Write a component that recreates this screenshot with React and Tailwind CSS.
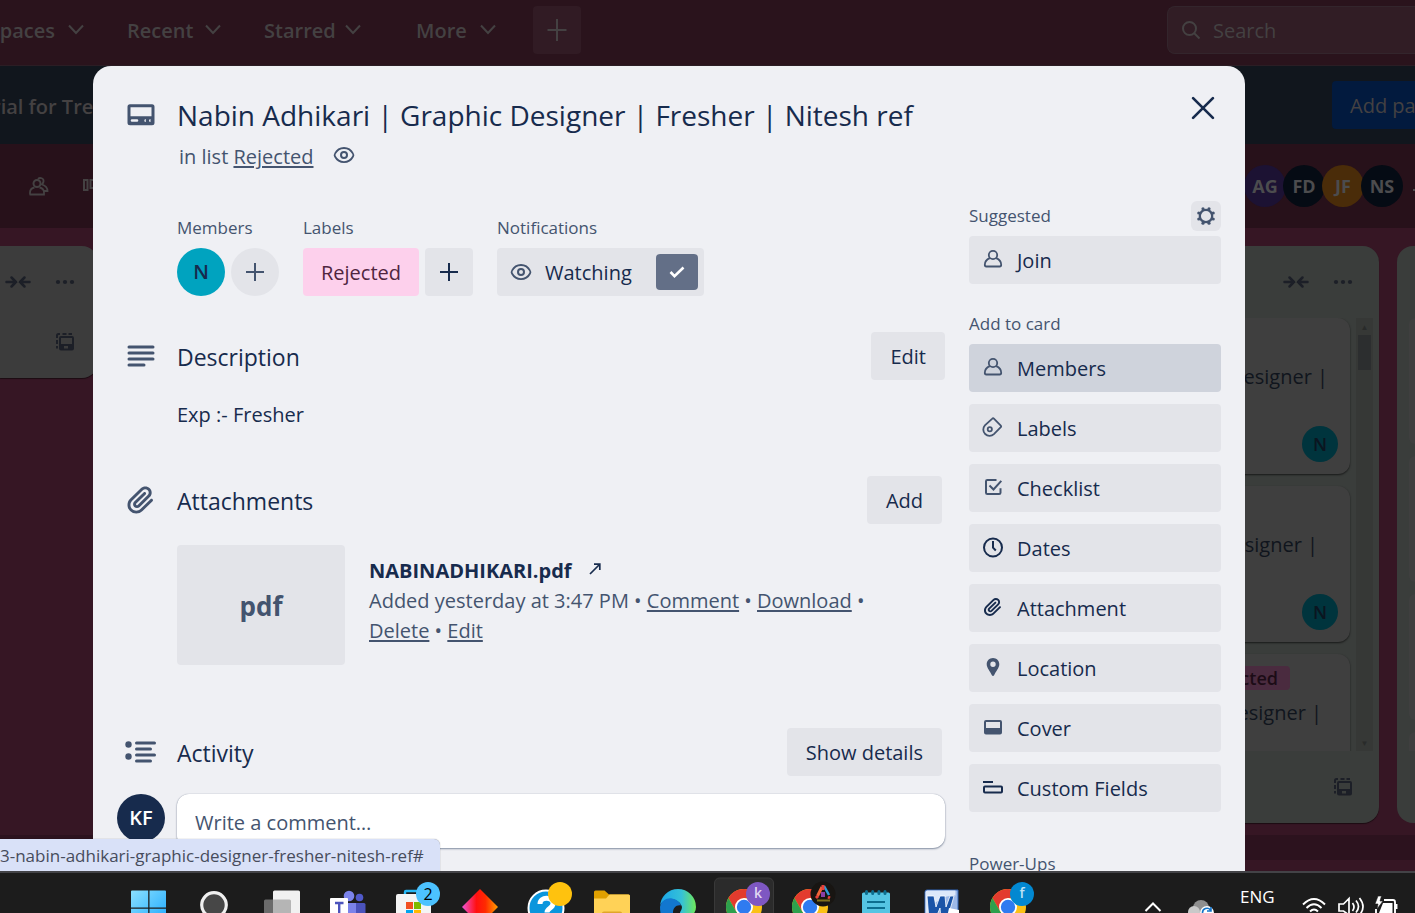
import React from "react";

const ATTACH =
  "M11.6426 17.9647C10.1123 19.46 7.62736 19.4606 6.10092 17.9691C4.57505 16.478 4.57769 14.0467 6.10253 12.5566L13.2505 5.57184C14.1476 4.6952 15.5861 4.69251 16.4832 5.56921C17.3763 6.44184 17.3778 7.85135 16.4869 8.72199L9.78361 15.2722C9.53288 15.5172 9.12807 15.5163 8.86954 15.2636C8.61073 15.0107 8.60963 14.6158 8.86954 14.3618L15.0989 8.27463C15.4812 7.90109 15.4812 7.29546 15.0989 6.92192C14.7167 6.54838 14.0969 6.54838 13.7146 6.92192L7.48523 13.0091C6.45911 14.0118 6.46356 15.618 7.48523 16.6163C8.50674 17.6145 10.1511 17.6186 11.1679 16.6249L17.8712 10.0748C19.5274 8.45632 19.5244 5.83555 17.8676 4.2165C16.2047 2.59156 13.5266 2.59657 11.8662 4.21913L4.71822 11.2039C2.42951 13.4404 2.42555 17.083 4.71661 19.3218C7.00774 21.5606 10.7323 21.5597 13.0269 19.3174L19.7133 12.7837C20.0956 12.4101 20.0956 11.8045 19.7133 11.431C19.331 11.0574 18.7113 11.0574 18.329 11.431L11.6426 17.9647Z";

function Svg({ box = "0 0 24 24", className, children }) {
  return (
    <svg viewBox={box} className={className} fill="none" stroke="currentColor" strokeWidth="2" aria-hidden="true">
      {children}
    </svg>
  );
}

/* ---------- icons ---------- */

const Chevron = () => (
  <Svg box="0 0 16 16" className="size-4 shrink-0">
    <path d="M1 3.500l7 7.500 7-7.500" strokeWidth="2" />
  </Svg>
);

const Plus = ({ className = "size-6" }) => (
  <Svg className={className}>
    <path d="M12 3v18M3 12h18" />
  </Svg>
);

const NavPlus = () => (
  <Svg className="size-6">
    <path d="M12 1v22M2.500 12h19" />
  </Svg>
);

const Eye = () => (
  <Svg className="size-6 shrink-0">
    <path d="M12 5c4.500 0 7.400 2.600 9 5.600.6 1 .6 1.900 0 2.900-1.600 3-4.500 5.600-9 5.600s-7.400-2.600-9-5.600c-.6-1-.6-1.900 0-2.900 1.600-3 4.500-5.600 9-5.600z" strokeWidth="1.800" />
    <circle cx="12" cy="12" r="3" strokeWidth="2" />
  </Svg>
);

const Person = () => (
  <Svg className="size-6">
    <circle cx="12" cy="8" r="4.200" strokeWidth="1.800" />
    <path d="M8.800 11.200c-3 1.300-5 3.800-5 6.600 0 1.200.5 1.700 1.500 1.700h13.400c1 0 1.500-.5 1.500-1.700 0-2.800-2-5.300-5-6.600" strokeWidth="1.800" />
  </Svg>
);

const LabelIcon = () => (
  <Svg className="size-6">
    <path d="M11.300 3.600c.5-.5 1.100-.5 1.600 0l6.900 7c.5.5.5 1.100 0 1.600l-6.900 6.900a6.300 6.300 0 0 1-9-8.800z" strokeWidth="1.800" />
    <circle cx="8.800" cy="14.300" r="2.100" strokeWidth="1.800" />
  </Svg>
);

const ChecklistIcon = () => (
  <Svg className="size-6">
    <path d="M15.500 4.900H6.400c-.9 0-1.400.5-1.400 1.400v11.400c0 .9.5 1.400 1.400 1.400h11.700c.9 0 1.400-.5 1.400-1.400v-4.500" strokeWidth="2" />
    <path d="M8.500 10.500l4 4 7.800-8.600" strokeWidth="2" />
  </Svg>
);

const ClockIcon = () => (
  <Svg className="size-6 text-[#172b4d]">
    <circle cx="12" cy="12.500" r="9" />
    <path d="M12 6v6.700l2.800 2.800" />
  </Svg>
);

const Clip = ({ className }) => (
  <svg viewBox="0 0 24 24" className={className} fill="currentColor" aria-hidden="true">
    <path fillRule="evenodd" d={ATTACH} />
  </svg>
);

const PinIcon = () => (
  <svg viewBox="0 0 24 24" className="size-6" fill="currentColor" aria-hidden="true">
    <path fillRule="evenodd" d="M12 3c-3.600 0-6.300 2.800-6.300 6.200 0 3.900 3.700 7.300 5.200 11 .4 1.100 1.800 1.100 2.200 0 1.500-3.700 5.200-7.100 5.200-11C18.300 5.800 15.600 3 12 3zm0 8.900a2.700 2.700 0 1 1 0-5.400 2.700 2.700 0 0 1 0 5.400z" />
  </svg>
);

const CoverIcon = () => (
  <svg viewBox="0 0 24 24" className="size-6" fill="currentColor" aria-hidden="true">
    <path fillRule="evenodd" d="M5 5h14a2 2 0 0 1 2 2v10.500a2 2 0 0 1-2 2H5a2 2 0 0 1-2-2V7a2 2 0 0 1 2-2zm0 2v6h14V7z" />
  </svg>
);

const FieldsIcon = () => (
  <Svg className="size-6 text-[#172b4d]">
    <path d="M2 7h10" />
    <rect x="3" y="11.500" width="18" height="6" rx="1" />
  </Svg>
);

const GearIcon = () => (
  <Svg box="0 0 20 20" className="size-5">
    <circle cx="10" cy="10" r="6.200" strokeWidth="2.300" />
    <g fill="currentColor" stroke="none">
      <circle cx="17.200" cy="13" r="1.600" />
      <circle cx="13" cy="17.200" r="1.600" />
      <circle cx="7" cy="17.200" r="1.600" />
      <circle cx="2.800" cy="13" r="1.600" />
      <circle cx="2.800" cy="7" r="1.600" />
      <circle cx="7" cy="2.800" r="1.600" />
      <circle cx="13" cy="2.800" r="1.600" />
      <circle cx="17.200" cy="7" r="1.600" />
    </g>
  </Svg>
);

const CardIcon = () => (
  <svg viewBox="0 0 28 24" className="h-6 w-7" fill="currentColor" aria-hidden="true">
    <path
      fillRule="evenodd"
      d="M3 1.200h22a2.500 2.500 0 0 1 2.500 2.500v16a2.500 2.500 0 0 1-2.500 2.500H3a2.500 2.500 0 0 1-2.500-2.500v-16A2.500 2.500 0 0 1 3 1.200zM3.500 4.200v9h21v-9zM5 16.200a1.300 1.300 0 0 0 0 2.600h5a1.300 1.300 0 0 0 0-2.600zM18.800 16a1.500 1.500 0 1 0 .001 3zM23.500 16a1.500 1.500 0 1 0 .001 3z"
    />
  </svg>
);

const TextIcon = () => (
  <Svg box="0 0 28 24" className="h-6 w-7">
    <path d="M2 3h24M2 9h24M2 15h24M2 21h15" strokeWidth="3" strokeLinecap="round" />
  </Svg>
);

const ActivityIcon = () => (
  <Svg box="0 0 32 24" className="h-6 w-8">
    <path d="M11.500 3h18M11.500 9h14M11.500 15h18M11.500 21h14" strokeWidth="3" strokeLinecap="round" />
    <circle cx="3.500" cy="4.500" r="3.200" fill="currentColor" stroke="none" />
    <circle cx="3.500" cy="16.500" r="3.200" fill="currentColor" stroke="none" />
  </Svg>
);

const Collapse = () => (
  <Svg box="0 0 26 14" className="h-[14px] w-[26px]">
    <path d="M1.500 7H11M6.500 2.500L11 7l-4.500 4.500M24.500 7H15M19.500 2.500L15 7l4.500 4.500" strokeWidth="2.500" strokeLinecap="round" />
  </Svg>
);

const Dots = () => (
  <svg viewBox="0 0 20 6" className="h-1.5 w-5" fill="currentColor" aria-hidden="true">
    <circle cx="3" cy="3" r="2.100" />
    <circle cx="10" cy="3" r="2.100" />
    <circle cx="17" cy="3" r="2.100" />
  </svg>
);

const TemplateIcon = () => (
  <Svg box="0 0 20 20" className="size-5">
    <path d="M2 16.500V14M2 12V8M2 6V3.500Q2 2 3.500 2H5M7.500 2h4M13.500 2H17" />
    <rect x="5" y="5" width="13" height="12.500" rx="1" />
    <path d="M5 13h13" strokeWidth="2" />
    <path d="M5 15.500h4M13 15.500h5" strokeWidth="4" />
  </Svg>
);

/* ---------- board behind the dialog ---------- */

function NavItem({ children, className }) {
  return (
    <button className={`flex items-center justify-between text-xl font-semibold ${className}`}>
      <span className="pt-0.5">{children}</span>
      <Chevron />
    </button>
  );
}

function ListHead() {
  return (
    <div className="flex h-[72px] items-center justify-end gap-6 pr-[26px] text-[#1c1f27]">
      <Collapse />
      <Dots />
    </div>
  );
}

function BoardCard({ title, label, member }) {
  return (
    <article className="flex h-[156px] w-full shrink-0 flex-col rounded-xl bg-[#3f3f3f] px-3 shadow-[0_1px_2px_rgba(0,0,0,0.6)]">
      <div className="flex h-[42px] items-center justify-end pt-1.5 pr-12">
        {label && <span className="rounded bg-[#4a2b3f] px-3 text-lg leading-6 font-semibold text-[#1c0c16]">{label}</span>}
      </div>
      <p className={`flex h-[34px] items-center justify-end text-xl text-[#10151d] ${title}`}>Graphic Designer |</p>
      {member && (
        <span className="mt-8 flex size-9 items-center justify-center self-end rounded-full bg-[#00343d] text-lg font-semibold text-[#0b1520]">
          {member}
        </span>
      )}
    </article>
  );
}

function Avatar({ children, className }) {
  return (
    <span className={`-ml-[3px] flex size-[42px] shrink-0 items-center justify-center rounded-full text-lg font-bold text-[#4c4c4e] ${className}`}>
      {children}
    </span>
  );
}

function Board() {
  return (
    <div className="flex h-full flex-col text-[#444142]">
      <header className="flex h-[66px] shrink-0 items-start border-b border-[#2b1d24] bg-[#2a131c] pt-1.5">
        <nav className="flex h-12 items-center">
          <NavItem className="-ml-[10px] w-[94px]">spaces</NavItem>
          <NavItem className="ml-[43px] w-[94px]">Recent</NavItem>
          <NavItem className="ml-[43px] w-[97px]">Starred</NavItem>
          <NavItem className="ml-[55px] w-[80px]">More</NavItem>
          <button aria-label="Create" className="ml-[37px] flex size-12 items-center justify-center rounded bg-[#311b24]">
            <NavPlus />
          </button>
        </nav>
        <label className="ml-auto flex h-12 w-[248px] items-center gap-3 rounded-l-lg border border-r-0 border-[#33252c] bg-[#311d25] pl-[13px]">
          <Svg box="0 0 20 20" className="size-5 shrink-0">
            <circle cx="8.500" cy="8.500" r="6.500" />
            <path d="M13 13l5.500 5.500" />
          </Svg>
          <input type="search" placeholder="Search" className="w-full bg-transparent pt-0.5 text-xl outline-none placeholder:text-[#444142]" />
        </label>
      </header>

      <div className="flex h-[78px] shrink-0 items-center justify-between bg-[#11161d]">
        <span className="-ml-2 pt-1 text-xl font-semibold">rial for Trello</span>
        <button className="h-12 w-[83px] overflow-hidden rounded-l bg-[#021a3e] pt-0.5 pl-[18px] text-left text-xl font-medium whitespace-nowrap">Add pa</button>
      </div>

      <div className="flex h-[84px] shrink-0 items-center justify-between bg-[#27111a]">
        <div className="flex items-center gap-8 pl-7">
          <Svg box="0 0 22 20" className="h-5 w-[22px]">
            <circle cx="9" cy="7.500" r="3.500" />
            <path d="M2 18.500v-2c0-2.500 2-4.500 4.500-5M11.500 11.500c2.500.5 4.500 2.500 4.500 5v2H1.500M10 3c2-2 6-.8 5.500 2.500-.2 1.500-1 2-1.500 3 3 1 5.500 2.500 5.500 6.500h-3" strokeWidth="1.800" />
          </Svg>
          <Svg box="0 0 22 16" className="h-4 w-[22px]">
            <rect x="2" y="2" width="3.500" height="10" />
            <rect x="8.500" y="2" width="3.500" height="8" />
          </Svg>
        </div>
        <div className="flex items-center">
          <Avatar className="bg-[#05101c]">N</Avatar>
          <Avatar className="bg-[#1c1233]">AG</Avatar>
          <Avatar className="bg-[#050b14]">FD</Avatar>
          <Avatar className="bg-[#4a2c09] text-[#1e1509]">JF</Avatar>
          <Avatar className="bg-[#050b14]">NS</Avatar>
          <span className="mt-2 ml-2.5 h-0.5 w-0.5 bg-[#4c4c4e]" />
        </div>
      </div>

      <main className="flex flex-1 items-start justify-between bg-[#361624] pt-[18px]">
        <section className="h-[132px] w-[98px] rounded-r-2xl bg-[#3c3c3c] shadow-[0_1px_1px_rgba(0,0,0,0.5)]">
          <div className="flex h-[72px] items-center gap-6 pl-[5px] text-[#1c1f27]">
            <Collapse />
            <Dots />
          </div>
          <div className="flex h-12 items-center pl-[55px] text-[#1c1f27]">
            <TemplateIcon />
          </div>
        </section>

        <div className="flex items-start gap-[18px]">
          <section className="h-[577px] w-[400px] rounded-2xl bg-[#3a3d3b] shadow-[0_1px_1px_rgba(0,0,0,0.5)]">
            <ListHead />
            <div className="flex h-[433px] justify-end gap-1.5 overflow-hidden pr-1.5">
              <div className="flex flex-1 flex-col gap-3 pl-3">
                <BoardCard title="pr-2.5" member="N" />
                <BoardCard title="pr-5" member="N" />
                <BoardCard title="pr-4" label="Rejected" />
              </div>
              <div className="flex w-[17px] flex-col items-center bg-[#363836] text-[8px] leading-[17px] text-[#292b2a]">
                <span>▲</span>
                <span className="h-[35px] w-[13px] bg-[#2c2e2f]" />
                <span className="mt-auto">▼</span>
              </div>
            </div>
            <div className="flex h-[72px] items-center justify-end pr-[26px] text-[#1c1f27]">
              <TemplateIcon />
            </div>
          </section>
          <section className="h-[577px] w-[18px] rounded-l-2xl bg-[#3a3d3b] pt-[72px] pl-3">
            <div className="flex h-[433px] flex-col gap-3 overflow-hidden">
              <div className="h-[126px] shrink-0 rounded-l-xl bg-[#3f3f3f]" />
              <div className="h-[126px] shrink-0 rounded-l-xl bg-[#3f3f3f]" />
              <div className="h-[126px] shrink-0 rounded-l-xl bg-[#3f3f3f]" />
              <div className="h-[126px] shrink-0 rounded-l-xl bg-[#3f3f3f]" />
            </div>
          </section>
        </div>
      </main>
      <div className="h-[25px] shrink-0 bg-[#2c121e]" />
      <div className="h-[11px] shrink-0 bg-[#361624]" />
    </div>
  );
}

/* ---------- card dialog ---------- */

const Btn = ({ children, className = "" }) => (
  <button className={`h-12 rounded bg-[#e3e4e9] px-[19px] pt-0.5 text-xl font-medium text-[#172b4d] ${className}`}>{children}</button>
);

function SideButton({ icon, children, active }) {
  return (
    <button
      className={`flex h-12 w-full items-center gap-3 rounded px-3 text-left text-xl font-medium text-[#172b4d] ${active ? "bg-[#cfd3dc]" : "bg-[#e3e4e9]"}`}
    >
      <span className="pb-0.5 text-[#44546f]">{icon}</span>
      <span className="pt-0.5">{children}</span>
    </button>
  );
}

function SectionHead({ icon, title, children }) {
  return (
    <div className="flex h-12 items-center">
      <span className="mr-3 flex w-12 justify-center text-[#44546f]">{icon}</span>
      <h3 className="flex-1 pt-0.5 text-[23px] font-medium text-[#172b4d]">{title}</h3>
      {children}
    </div>
  );
}

const SmallLabel = ({ children }) => <h4 className="text-[17px] leading-6 font-medium text-[#44546f]">{children}</h4>;

const TextLink = ({ children }) => (
  <a href="#" className="underline decoration-2 underline-offset-2">
    {children}
  </a>
);

function Dialog() {
  return (
    <section role="dialog" aria-label="Card details" className="min-h-full rounded-t-[18px] bg-[#eff0f4] px-6 pt-7 pb-12 text-[#172b4d]">
      <header className="flex items-start">
        <span className="mr-3 flex h-[42px] w-12 items-center justify-center text-[#44546f]">
          <CardIcon />
        </span>
        <div className="flex-1">
          <h2 className="text-[28px] leading-[42px] font-medium">Nabin Adhikari | Graphic Designer | Fresher | Nitesh ref</h2>
          <p className="mt-1.5 flex items-center pl-0.5 text-xl leading-[30px] text-[#44546f]">
            <span>
              in list <TextLink>Rejected</TextLink>
            </span>
            <span className="ml-[18px] pb-1">
              <Eye />
            </span>
          </p>
        </div>
        <button aria-label="Close" className="mr-1">
          <Svg className="size-7">
            <path d="M3.500 3.500l17 17M20.500 3.500l-17 17" strokeWidth="2.300" strokeLinecap="round" />
          </Svg>
        </button>
      </header>

      <div className="mt-8 flex gap-6">
        <div className="min-w-0 flex-1 pt-3">
          <div className="flex gap-6 pl-[60px]">
            <div>
              <SmallLabel>Members</SmallLabel>
              <div className="mt-2 flex gap-1.5">
                <span className="flex size-12 items-center justify-center rounded-full bg-[#00a3bf] text-xl font-semibold">N</span>
                <button aria-label="Add member" className="flex size-12 items-center justify-center rounded-full bg-[#e3e4e9] text-[#44546f]">
                  <Plus />
                </button>
              </div>
            </div>
            <div>
              <SmallLabel>Labels</SmallLabel>
              <div className="mt-2 flex gap-1.5">
                <button className="h-12 rounded bg-[#fdd0ec] px-[18px] pt-0.5 text-xl font-medium text-[#50253f]">Rejected</button>
                <button aria-label="Add label" className="flex size-12 items-center justify-center rounded bg-[#e3e4e9]">
                  <Plus />
                </button>
              </div>
            </div>
            <div>
              <SmallLabel>Notifications</SmallLabel>
              <button className="mt-2 flex h-12 items-center rounded bg-[#e3e4e9] pr-1.5 pl-3 text-xl font-medium">
                <span className="mr-3 text-[#44546f]">
                  <Eye />
                </span>
                <span className="pt-0.5">Watching</span>
                <span className="ml-6 flex h-9 w-[42px] items-center justify-center rounded bg-[#636f87] text-white">
                  <Svg className="size-6">
                    <path d="M5.500 12l4 4.200L18.500 7.500" strokeWidth="2.600" />
                  </Svg>
                </span>
              </button>
            </div>
          </div>

          <div className="mt-9">
            <SectionHead icon={<TextIcon />} title="Description">
              <Btn>Edit</Btn>
            </SectionHead>
            <p className="mt-5 pl-[60px] text-xl leading-[30px]">Exp :- Fresher</p>
          </div>

          <div className="mt-[46px]">
            <SectionHead icon={<Clip className="size-9" />} title="Attachments">
              <Btn className="mr-[3px]">Add</Btn>
            </SectionHead>
            <div className="mt-[21px] flex gap-6 pl-[60px]">
              <div className="flex h-[120px] w-[168px] shrink-0 items-center justify-center rounded bg-[#e3e4e9] pt-0.5 text-[26px] font-bold text-[#44546f]">
                pdf
              </div>
              <div className="pt-[11px] pr-5 text-xl leading-[30px] text-[#44546f]">
                <p className="flex items-center gap-4 font-bold text-[#172b4d]">
                  NABINADHIKARI.pdf
                  <Svg box="0 0 14 14" className="mb-1 size-3.5">
                    <path d="M2 12l9.500-9.500M6 2.200h5.800V8" strokeWidth="1.700" />
                  </Svg>
                </p>
                <p>
                  Added yesterday at 3:47 PM • <TextLink>Comment</TextLink> • <TextLink>Download</TextLink> • <TextLink>Delete</TextLink> •{" "}
                  <TextLink>Edit</TextLink>
                </p>
              </div>
            </div>
          </div>

          <div className="mt-[63px]">
            <SectionHead icon={<ActivityIcon />} title="Activity">
              <Btn className="mr-[3px]">Show details</Btn>
            </SectionHead>
            <div className="mt-[18px] flex gap-3">
              <span className="flex size-12 shrink-0 items-center justify-center rounded-full bg-[#172b4d] text-xl font-semibold text-white">KF</span>
              <input
                aria-label="Write a comment"
                placeholder="Write a comment…"
                className="h-[54px] min-w-0 flex-1 rounded-xl bg-white px-[18px] pt-0.5 text-xl shadow-[0_1px_2px_rgba(9,30,66,0.45),0_0_1px_rgba(9,30,66,0.35)] outline-none placeholder:text-[#44546f]"
              />
            </div>
          </div>
        </div>

        <aside className="w-[252px] shrink-0">
          <div className="flex h-6 items-center justify-between">
            <SmallLabel>Suggested</SmallLabel>
            <button aria-label="Suggestion settings" className="flex size-[30px] items-center justify-center rounded-md bg-[#e3e4e9] text-[#44546f]">
              <GearIcon />
            </button>
          </div>
          <div className="mt-2">
            <SideButton icon={<Person />}>Join</SideButton>
          </div>
          <div className="mt-7">
            <SmallLabel>Add to card</SmallLabel>
          </div>
          <div className="mt-2 flex flex-col gap-3">
            <SideButton icon={<Person />} active>Members</SideButton>
            <SideButton icon={<LabelIcon />}>Labels</SideButton>
            <SideButton icon={<ChecklistIcon />}>Checklist</SideButton>
            <SideButton icon={<ClockIcon />}>Dates</SideButton>
            <SideButton icon={<Clip className="size-6 text-[#172b4d]" />}>Attachment</SideButton>
            <SideButton icon={<PinIcon />}>Location</SideButton>
            <SideButton icon={<CoverIcon />}>Cover</SideButton>
            <SideButton icon={<FieldsIcon />}>Custom Fields</SideButton>
          </div>
          <div className="mt-10">
            <SmallLabel>Power-Ups</SmallLabel>
          </div>
        </aside>
      </div>
    </section>
  );
}

/* ---------- taskbar ---------- */

function Chrome() {
  return (
    <g>
      <circle cx="32" cy="36" r="18" fill="#fbc116" />
      <path d="M16.400 27A18 18 0 0 1 47.600 27L32 27L24.200 40.500z" fill="#e33b2e" />
      <path d="M16.400 27A18 18 0 0 0 26 53L30 45L24.200 40.500z" fill="#2da04d" />
      <circle cx="32" cy="36" r="9" fill="#fff" />
      <circle cx="32" cy="36" r="7.200" fill="#2f7bf0" />
    </g>
  );
}

function TaskButton({ label, active, children }) {
  return (
    <button aria-label={label} className="relative h-[42px] w-[66px] shrink-0">
      <svg viewBox="0 0 66 42" className="h-[42px] w-[66px]" aria-hidden="true">
        {active && <rect x="5.500" y="7" width="59" height="50" rx="5" fill="#2b2b2b" stroke="#393939" />}
        {children}
      </svg>
    </button>
  );
}

const Badge = ({ children, className }) => (
  <span className={`absolute flex size-6 items-center justify-center rounded-full ${className}`}>{children}</span>
);

function Taskbar() {
  return (
    <footer className="flex h-[42px] shrink-0 overflow-hidden border-t-2 border-[#434347] bg-[#1c1c1c] text-white">
      <div className="-mt-0.5 ml-[115px] flex">
        <TaskButton label="Start">
          <defs>
            <linearGradient id="win" x1="0" y1="0" x2="1" y2="1">
              <stop offset="0" stopColor="#8be0ff" />
              <stop offset="1" stopColor="#1aa7ff" />
            </linearGradient>
          </defs>
          <path d="M16 20.500q0-1 1-1h16.200v17H16zM34.500 19.500H50q1 0 1 1v16H34.500zM16 37.800h17.200V54H16zM34.500 37.800H51V54H34.500z" fill="url(#win)" />
        </TaskButton>
        <TaskButton label="Search">
          <circle cx="33" cy="34" r="12.300" fill="#474747" stroke="#f0f0f0" strokeWidth="3.200" />
        </TaskButton>
        <TaskButton label="Task view">
          <rect x="26" y="19.500" width="27" height="40" rx="1.500" fill="#f1f1f1" />
          <path d="M17 30q0-1.500 1.500-1.500H26V60h-9z" fill="#6b6b6b" />
          <path d="M26 28.500h16.500q1.500 0 1.500 1.500v30H26z" fill="#b5b5b5" />
        </TaskButton>
        <TaskButton label="Teams">
          <circle cx="36" cy="25" r="5.300" fill="#7b83eb" />
          <circle cx="46.500" cy="26.500" r="3.800" fill="#5059c9" />
          <path d="M33 32h12v20H33z" fill="#7b83eb" />
          <path d="M43 32h8q1.500 0 1.500 1.500V52H43z" fill="#4b53bc" />
          <rect x="17" y="27" width="18" height="20" rx="1" fill="#fff" />
          <path d="M22 32h8.500M26.200 32v12" stroke="#4b53bc" strokeWidth="2.400" />
        </TaskButton>
        <span className="relative">
          <TaskButton label="Store">
            <path d="M26 26v-5q0-1 1-1h12" fill="none" stroke="#27b8f5" strokeWidth="2.400" />
            <path d="M17 25q0-2 2-2h31q2 0 2 2v30H17z" fill="#f4f4f4" />
            <path d="M27 31h7v7h-7z" fill="#f25022" />
            <path d="M35 31h7v7h-7z" fill="#7fba00" />
            <path d="M27 39h7v7h-7z" fill="#00a4ef" />
            <path d="M35 39h7v7h-7z" fill="#ffb900" />
          </TaskButton>
          <Badge className="top-[11px] left-[37px] bg-[#4cc2ff] text-base text-black">2</Badge>
        </span>
        <TaskButton label="Draw">
          <defs>
            <linearGradient id="dia">
              <stop offset="0" stopColor="#f055d8" />
              <stop offset="0.400" stopColor="#ff1010" />
              <stop offset="0.650" stopColor="#ff2a00" />
              <stop offset="1" stopColor="#ffa000" />
            </linearGradient>
          </defs>
          <path d="M35 18l18 18-18 18-18-18z" fill="url(#dia)" />
        </TaskButton>
        <span className="relative">
          <TaskButton label="Help">
            <circle cx="35" cy="37" r="17.500" fill="#0a96dd" stroke="#fff" strokeWidth="2" />
            <path d="M29 33c0-7.500 13-7.500 13-.5 0 5-6 4.500-6 9" fill="none" stroke="#fff" strokeWidth="5" />
          </TaskButton>
          <Badge className="top-[11px] left-[37px] bg-[#ffc20e]" />
        </span>
        <TaskButton label="Files">
          <path d="M17 21q0-1.500 1.500-1.500h9l4.500 4h19.500q1.500 0 1.500 1.500v5H17z" fill="#e0a000" />
          <path d="M17 27.500h12l3.500-4h19q1.500 0 1.500 1.500v30H17z" fill="#ffd257" />
          <path d="M25 42q0-1.500 2-1.500h16q2 0 2 1.500z" fill="#e0a52a" />
        </TaskButton>
        <TaskButton label="Edge">
          <defs>
            <linearGradient id="edge">
              <stop offset="0" stopColor="#1aa5e8" />
              <stop offset="0.600" stopColor="#35c1d8" />
              <stop offset="1" stopColor="#6fe85a" />
            </linearGradient>
          </defs>
          <path d="M17 36a18 18 0 0 1 36 0q0 9-10 9-6 0-6-3c0-2 2-3 2-6-1-5-7-8-12-8-5 0-10 4-10 8z" fill="url(#edge)" />
          <path d="M17 36c1-6 7-9.500 12-8.500 5 .8 8 4 9 7-5-1-8 3-8 7v8H20q-3-6-3-13.500z" fill="#1277cf" />
        </TaskButton>
        <span className="relative">
          <TaskButton label="Chrome profile k" active>
            <g transform="translate(3 0)">
              <Chrome />
            </g>
          </TaskButton>
          <Badge className="top-[11px] left-[37px] bg-[#7e57c2] pb-0.5 text-sm font-semibold text-[#e0d6f2]">k</Badge>
        </span>
        <TaskButton label="Chrome profile">
          <g transform="translate(3 0)">
            <Chrome />
          </g>
          <circle cx="48" cy="23" r="12.500" fill="#181512" />
          <path d="M47 16l-4.500 9" stroke="#f0663a" strokeWidth="3" />
          <path d="M49 15l5 9" stroke="#2f9bd8" strokeWidth="2.500" />
          <path d="M48 14v5M41 25l2 2M53 26l2 1" stroke="#e8403a" strokeWidth="3" />
          <path d="M48 21v5" stroke="#8a3fa8" strokeWidth="4" />
          <path d="M42 29.500h13" stroke="#80701c" strokeWidth="2" />
        </TaskButton>
        <TaskButton label="Notepad">
          <path d="M21 23q0-1.500 1.500-1.500h25q1.500 0 1.500 1.500v32H21z" fill="#55c5e3" />
          <path d="M26 31h18M26 37h18" stroke="#0c6f90" strokeWidth="2" />
          <path d="M25.500 20.500v2M31.700 20.500v2M37.900 20.500v2M44 20.500v2" stroke="#0c6f90" strokeWidth="3" strokeLinecap="round" />
        </TaskButton>
        <TaskButton label="Word">
          <path d="M18 21q0-2 2-2h31v36H18z" fill="#9db9e8" stroke="#2f62b5" />
          <path d="M18.500 21q0-1.500 2-1.500h28v5q-19 0-28 18h-2z" fill="#dce8fa" />
          <path d="M20 25h7l2 11 4-11h5l1 11 4-11h4l-7 24h-6l-1-12-5 12h-6z" fill="#1a54a8" stroke="#fff" strokeWidth="0.800" />
          <path d="M42 37l10 2v8H40z" fill="#fff" />
        </TaskButton>
        <span className="relative">
          <TaskButton label="Chrome profile f">
            <g transform="translate(3 0)">
              <Chrome />
            </g>
          </TaskButton>
          <Badge className="top-[11px] left-[37px] bg-[#0288d1] pb-0.5 text-sm font-semibold text-[#bfe2f5]">f</Badge>
        </span>
      </div>

      <div className="-mt-0.5 ml-auto flex pr-4">
        <svg viewBox="0 0 18 42" className="h-[42px] w-[18px]" fill="none" stroke="#fff" strokeWidth="2" aria-hidden="true">
          <path d="M1.500 40L9 32.500l7.500 7.500" />
        </svg>
        <svg viewBox="0 0 26 42" className="ml-[26px] h-[42px] w-[26px]" aria-hidden="true">
          <circle cx="13" cy="37" r="8" fill="#8f8f8f" />
          <circle cx="6" cy="41" r="6" fill="#c9c9c9" />
          <circle cx="19" cy="42" r="7" fill="#fff" />
          <path d="M14.500 42a4.500 4.500 0 0 1 8-3M23 36v4h-4" fill="none" stroke="#1473c8" strokeWidth="1.600" />
        </svg>
        <span className="ml-[26px] w-[38px] pt-[14px] text-[17px] leading-6">ENG</span>
        <svg viewBox="0 0 24 42" className="ml-[24px] h-[42px] w-6" fill="none" stroke="#fff" strokeWidth="1.900" aria-hidden="true">
          <path d="M1 33.500q11-11 22 0M4.500 37q7.500-7.500 15 0M8 40.500q4-4 8 0" />
        </svg>
        <svg viewBox="0 0 26 42" className="ml-3 h-[42px] w-[26px]" fill="none" stroke="#fff" strokeWidth="1.700" aria-hidden="true">
          <path d="M1 33h4.500L11 27.500V44L5.500 40H1zM14.500 32q3 4 0 8M18 29.500q5 6 0 12M21.500 27q7 9 0 17" />
        </svg>
        <svg viewBox="0 0 26 42" className="ml-[9px] h-[42px] w-[26px]" fill="none" stroke="#fff" strokeWidth="1.900" aria-hidden="true">
          <path d="M11 29h9q2 0 2 2v12H3v-5M23.500 33v5" />
          <path d="M10 32h9.500v10H6z" fill="#fff" stroke="none" />
          <path d="M5 25L2 33h3l-1 5 6-8H7l1.500-5z" fill="#fff" stroke="#1c1c1c" strokeWidth="0.600" />
        </svg>
      </div>
    </footer>
  );
}

export default function App() {
  return (
    <div className="flex h-screen flex-col overflow-hidden bg-[#1c1c1c] font-['Open_Sans',sans-serif]">
      <div className="relative min-h-0 flex-1 overflow-hidden">
        <Board />
        <div className="absolute inset-0 overflow-hidden pt-[66px] pr-[170px] pl-[93px]">
          <Dialog />
        </div>
        <div className="absolute bottom-0 left-0 flex h-8 items-center rounded-tr-md bg-[#d9e1f8] pt-0.5 pr-4 text-[17px] text-[#474c5c] shadow-[0_0_1px_rgba(0,0,0,0.5)]">
          3-nabin-adhikari-graphic-designer-fresher-nitesh-ref#
        </div>
      </div>
      <Taskbar />
    </div>
  );
}
